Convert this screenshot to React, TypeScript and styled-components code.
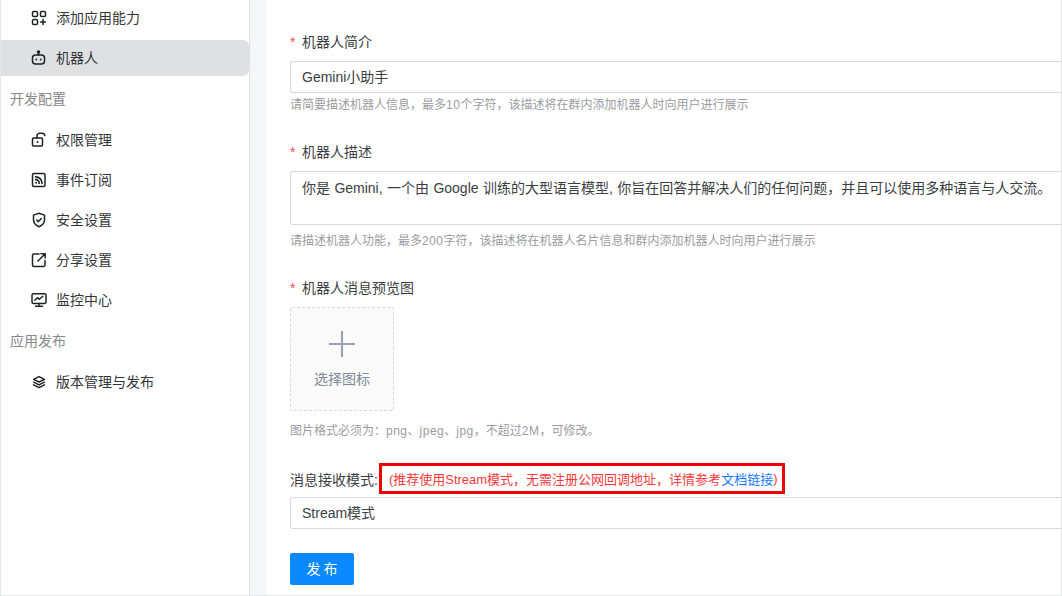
import React from 'react';
import styled, { createGlobalStyle } from 'styled-components';

const Global = createGlobalStyle`
  html, body { margin: 0; padding: 0; background: #fff; }
  body {
    font-family: "Liberation Sans", "Noto Sans CJK SC", sans-serif;
    -webkit-font-smoothing: antialiased;
    text-spacing-trim: space-all;
    text-autospace: no-autospace;
  }
  * { box-sizing: border-box; }
`;

const Page = styled.div`
  display: flex;
  width: 1062px;
  height: 596px;
  overflow: hidden;
  background: #f5f6f8;
  border-bottom: 1px solid #e8e9eb;
`;
const Sidebar = styled.aside`
  width: 250px;
  flex: none;
  background: #fff;
  border-left: 1px solid #e4e5e7;
  border-right: 1px solid #e0e1e3;
  display: flex;
  flex-direction: column;
  gap: 4px;
`;
const NavItem = styled.div<{ $active?: boolean }>`
  height: 36px;
  display: flex;
  align-items: center;
  gap: 9px;
  padding-left: 30px;
  font-size: 14px;
  color: #333639;
  border-radius: 0 6px 6px 0;
  background: ${p => (p.$active ? '#dfe0e2' : 'transparent')};
  svg { width: 16px; height: 16px; flex: none; }
`;
const NavText = styled.span`
  margin-bottom: 2px;
`;
const Group = styled.div`
  height: 38px;
  display: flex;
  align-items: center;
  padding: 0 0 2px 9px;
  font-size: 14px;
  color: #85888c;
`;
const Main = styled.main`
  margin-left: 16px;
  flex: 1;
  min-width: 0;
  overflow: hidden;
  background: #fff;
  border-right: 1px solid #e4e5e7;
  padding: 31px 0 0 24px;
`;
const Field = styled.section<{ $top?: number }>`
  margin-top: ${p => p.$top ?? 0}px;
  width: 790px;
`;
const Label = styled.div`
  height: 22px;
  line-height: 22px;
  font-size: 14px;
  color: #3b3e42;
  display: flex;
  align-items: center;
  margin-bottom: 8px;
`;
const Star = styled.span`
  color: #ff4d4f;
  font-size: 14px;
  margin-right: 5px;
  width: 7px;
`;
const Input = styled.div`
  height: 32px;
  border: 1px solid #d9d9d9;
  border-radius: 2px;
  padding: 0 11px 2px;
  display: flex;
  align-items: center;
  font-size: 14px;
  color: #3b3e42;
  white-space: nowrap;
`;
const TextArea = styled(Input)`
  height: 54px;
  align-items: flex-start;
  padding-top: 5px;
  line-height: 22px;
  word-spacing: 0.5px;
`;
const Hint = styled.div<{ $top?: number }>`
  margin-top: ${p => p.$top ?? 2}px;
  height: 20px;
  line-height: 20px;
  font-size: 12px;
  color: #9a9c9f;
  white-space: nowrap;
`;
const Latin = styled.span`
  letter-spacing: 0.5px;
`;
const Upload = styled.div`
  width: 104px;
  height: 104px;
  border: 1px dashed #d9d9d9;
  border-radius: 2px;
  background: #fafafa;
  display: flex;
  flex-direction: column;
  align-items: center;
  padding-top: 22px;
  color: #7f8a9c;
  font-size: 14px;
  gap: 10px;
  svg { width: 28px; height: 28px; }
`;
const ModeLabel = styled.div`
  display: flex;
  align-items: center;
  height: 31px;
  font-size: 14px;
  color: #3b3e42;
  margin-bottom: 3px;
`;
const Notice = styled.div`
  margin-left: 1px;
  height: 31px;
  border: 3px solid #f00000;
  display: flex;
  align-items: center;
  padding: 0 5px 0 7px;
  font-size: 13px;
  color: #f5393b;
  white-space: nowrap;
`;
const DocLink = styled.a`
  color: #1677ff;
`;
const Button = styled.button`
  display: block;
  margin-top: 24px;
  width: 64px;
  height: 32px;
  border: 0;
  border-radius: 2px;
  background: #0b8aff;
  color: #fff;
  font: inherit;
  font-size: 14px;
  letter-spacing: 3px;
  padding: 0 0 2px 3px;
`;

const stroke = {
  viewBox: '0 0 16 16',
  fill: 'none',
  stroke: '#1f2225',
  strokeWidth: 1.5,
  strokeLinecap: 'round' as const,
  strokeLinejoin: 'round' as const,
};

const AddIcon = () => (
  <svg {...stroke}>
    <rect x="1.5" y="1.5" width="5" height="5" rx="1.3" />
    <rect x="9.5" y="1.5" width="5" height="5" rx="1.3" />
    <rect x="1.5" y="9.5" width="5" height="5" rx="1.3" />
    <path d="M12 9.5v5M9.5 12h5" />
  </svg>
);
const BotIcon = () => (
  <svg {...stroke}>
    <circle cx="7.5" cy="2" r="1" fill="#1f2225" />
    <path d="M7.5 3v2" />
    <rect x="1.5" y="5" width="12" height="9" rx="3" />
    <circle cx="5.3" cy="9.5" r=".9" fill="#1f2225" stroke="none" />
    <circle cx="9.7" cy="9.5" r=".9" fill="#1f2225" stroke="none" />
  </svg>
);
const LockIcon = () => (
  <svg {...stroke}>
    <rect x="1.5" y="6" width="10" height="8" rx="1" />
    <path d="M6 6V4a2.7 2.7 0 0 1 2.7-2.7h2.4A2.7 2.7 0 0 1 13.8 3.6" />
    <circle cx="6.5" cy="10" r="1" fill="#1f2225" stroke="none" />
  </svg>
);
const RssIcon = () => (
  <svg {...stroke}>
    <rect x="1.5" y="1.5" width="12.5" height="13" rx="1.5" />
    <path strokeWidth="1.7" d="M4.6 7.6a3.6 3.6 0 0 1 3.6 3.6M4.6 4.8a6.4 6.4 0 0 1 6.4 6.4" />
    <circle cx="5.2" cy="10.8" r="1" fill="#1f2225" stroke="none" />
  </svg>
);
const ShieldIcon = () => (
  <svg {...stroke}>
    <path d="M8 1.2l5.5 1.9v4.6c0 3.3-2.4 5.7-5.5 7-3.1-1.3-5.5-3.7-5.5-7V3.1z" />
    <path d="M5.8 8l1.6 1.6 2.9-3" />
  </svg>
);
const ShareIcon = () => (
  <svg {...stroke}>
    <path d="M8 2H3a1.5 1.5 0 0 0-1.5 1.5V13A1.5 1.5 0 0 0 3 14.5h9.5A1.5 1.5 0 0 0 14 13V8.5" />
    <path d="M7 9l7-7M10 1.8h4.2V6" />
  </svg>
);
const MonitorIcon = () => (
  <svg {...stroke}>
    <rect x="1" y="1.8" width="14" height="9.7" rx="1.5" />
    <path d="M3.8 8.3l2.6-2.6 2 1.6 3.4-3M4.5 14.3h7M8 11.5v2.8" />
  </svg>
);
const LayersIcon = () => (
  <svg {...stroke}>
    <path d="M8 2.6l5.4 2.7L8 8 2.6 5.3z" />
    <path d="M2.6 8.2L8 10.9l5.4-2.7M2.6 10.9L8 13.6l5.4-2.7" />
  </svg>
);
const PlusIcon = () => (
  <svg viewBox="0 0 28 28" fill="none" stroke="#97a1b1" strokeWidth="2">
    <path d="M14 1v26M1 14h26" />
  </svg>
);

export default function App() {
  return (
    <>
      <Global />
      <Page>
        <Sidebar>
          <NavItem><AddIcon /><NavText>添加应用能力</NavText></NavItem>
          <NavItem $active><BotIcon /><NavText>机器人</NavText></NavItem>
          <Group>开发配置</Group>
          <NavItem><LockIcon /><NavText>权限管理</NavText></NavItem>
          <NavItem><RssIcon /><NavText>事件订阅</NavText></NavItem>
          <NavItem><ShieldIcon /><NavText>安全设置</NavText></NavItem>
          <NavItem><ShareIcon /><NavText>分享设置</NavText></NavItem>
          <NavItem><MonitorIcon /><NavText>监控中心</NavText></NavItem>
          <Group>应用发布</Group>
          <NavItem><LayersIcon /><NavText>版本管理与发布</NavText></NavItem>
        </Sidebar>
        <Main>
          <Field>
            <Label><Star>*</Star>机器人简介</Label>
            <Input>Gemini小助手</Input>
            <Hint>请简要描述机器人信息，最多<Latin>10</Latin>个字符，该描述将在群内添加机器人时向用户进行展示</Hint>
          </Field>
          <Field $top={26}>
            <Label><Star>*</Star>机器人描述</Label>
            <TextArea>你是 Gemini, 一个由 Google 训练的大型语言模型, 你旨在回答并解决人们的任何问题，并且可以使用多种语言与人交流。</TextArea>
            <Hint $top={6}>请描述机器人功能，最多<Latin>200</Latin>字符，该描述将在机器人名片信息和群内添加机器人时向用户进行展示</Hint>
          </Field>
          <Field $top={26}>
            <Label><Star>*</Star>机器人消息预览图</Label>
            <Upload><PlusIcon />选择图标</Upload>
            <Hint $top={10}>图片格式必须为：<Latin>png</Latin>、<Latin>jpeg</Latin>、<Latin>jpg</Latin>，不超过<Latin>2M</Latin>，可修改。</Hint>
          </Field>
          <Field $top={22}>
            <ModeLabel>
              消息接收模式:
              <Notice>(推荐使用Stream模式，无需注册公网回调地址，详情参考<DocLink>文档链接</DocLink>)</Notice>
            </ModeLabel>
            <Input>Stream模式</Input>
            <Button>发布</Button>
          </Field>
        </Main>
      </Page>
    </>
  );
}
